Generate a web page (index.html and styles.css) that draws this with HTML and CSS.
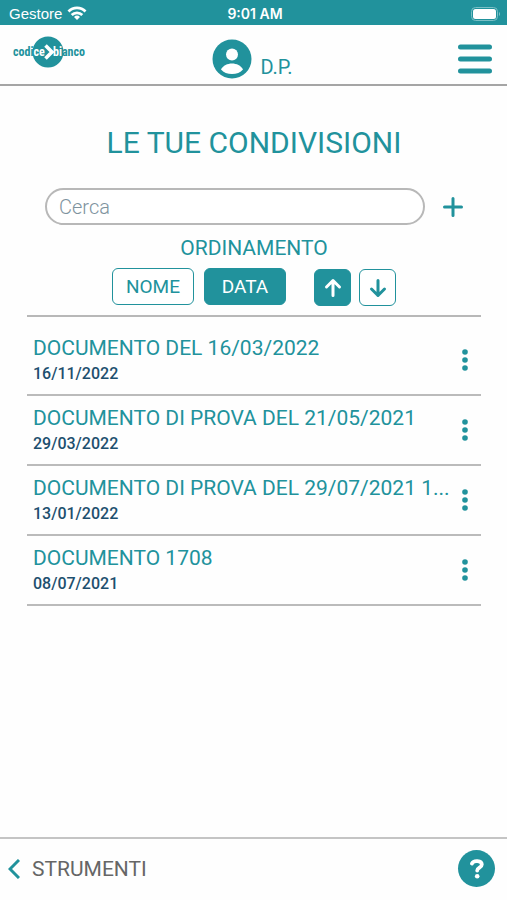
FILE: index.html
```html
<!DOCTYPE html>
<html lang="it">
<head>
    <meta charset="UTF-8">
    <meta name="viewport" content="width=device-width, initial-scale=1.0">
    <title>Le tue condivisioni | Codice Bianco</title>
    <link rel="stylesheet" href="styles.css">
</head>
<body>
    <div class="status-bar">
        <div class="carrier">
            <span>Gestore</span>
            <svg width="20" height="15" viewBox="0 0 20 15" fill="none" stroke="#fff" stroke-width="2.8">
                <path d="M1.5 5.5a12 12 0 0 1 17 0"/>
                <path d="M4.7 9a7.6 7.6 0 0 1 10.6 0"/>
                <path d="M10 14l-3-3a4.3 4.3 0 0 1 6 0z" fill="#fff" stroke="none"/>
            </svg>
        </div>
        <span class="time">9:01 AM</span>
        <div class="battery">
            <svg width="30" height="14" viewBox="0 0 30 14">
                <rect x="0.5" y="0.5" width="26" height="13" rx="4" fill="none" stroke="#7abfc5"/>
                <rect x="2" y="2" width="23" height="10" rx="2.5" fill="#fff"/>
                <path d="M28 5a2.4 2.4 0 0 1 0 4z" fill="#7abfc5"/>
            </svg>
        </div>
    </div>

    <header class="header">
        <a href="#" class="logo" aria-label="codice bianco">
            <svg width="74" height="32" viewBox="0 0 74 32">
                <circle cx="36" cy="16" r="15.5" fill="#21929c"/>
                <text x="1" y="20" fill="#21929c">codi<tspan fill="#fff">ce</tspan></text>
                <path d="M33.500 9.500l6.500 6.500-6.500 6.500" fill="none" stroke="#fff" stroke-width="3.600"/>
                <text x="73" y="20" text-anchor="end" fill="#21929c"><tspan fill="#fff">bi</tspan>anco</text>
            </svg>
        </a>
        <a href="#" class="user">
            <svg width="40" height="40" viewBox="0 0 40 40">
                <circle cx="20" cy="20" r="19.5" fill="#21929c"/>
                <circle cx="20" cy="15.500" r="6" fill="#fff"/>
                <path d="M9 30.500C11 26.500 15.500 24.500 20 24.500s9 2 11 6C28.500 33.500 24.500 35 20 35s-8.500-1.500-11-4.500z" fill="#fff"/>
            </svg>
            <span>D.P.</span>
        </a>
        <button type="button" class="menu-btn" aria-label="Menu">
            <svg width="36" height="32" viewBox="0 0 36 32" stroke="#21929c" stroke-width="5" stroke-linecap="round">
                <path d="M3.500 4h29M3.500 16h29M3.500 28h29"/>
            </svg>
        </button>
    </header>

    <main class="content">
        <h1>LE TUE CONDIVISIONI</h1>

        <div class="search">
            <input type="text" placeholder="Cerca" aria-label="Cerca">
            <button type="button" class="add-btn" aria-label="Aggiungi">
                <svg width="20" height="20" viewBox="0 0 20 20" stroke="#21929c" stroke-width="3" stroke-linecap="round">
                    <path d="M10 1.500v17M1.500 10h17"/>
                </svg>
            </button>
        </div>

        <h2>ORDINAMENTO</h2>
        <div class="sort">
            <button type="button" class="btn">NOME</button>
            <button type="button" class="btn active">DATA</button>
            <button type="button" class="btn arrow first active" aria-label="Crescente">
                <svg width="18" height="20" viewBox="0 0 18 20">
                    <path d="M9 17.500V2.500M2.500 9L9 2.500 15.500 9"/>
                </svg>
            </button>
            <button type="button" class="btn arrow" aria-label="Decrescente">
                <svg width="18" height="20" viewBox="0 0 18 20">
                    <path d="M9 2.500v15M2.500 11L9 17.500l6.500-6.500"/>
                </svg>
            </button>
        </div>

        <ul class="documents">
            <li>
                <div class="info">
                    <a href="#">DOCUMENTO DEL 16/03/2022</a>
                    <span class="date">16/11/2022</span>
                </div>
                <button type="button" class="more" aria-label="Opzioni">
                    <svg width="8" height="22" viewBox="0 0 8 22"><circle cx="4" cy="3" r="2.800"/><circle cx="4" cy="11" r="2.800"/><circle cx="4" cy="19" r="2.800"/></svg>
                </button>
            </li>
            <li>
                <div class="info">
                    <a href="#">DOCUMENTO DI PROVA DEL 21/05/2021</a>
                    <span class="date">29/03/2022</span>
                </div>
                <button type="button" class="more" aria-label="Opzioni">
                    <svg width="8" height="22" viewBox="0 0 8 22"><circle cx="4" cy="3" r="2.800"/><circle cx="4" cy="11" r="2.800"/><circle cx="4" cy="19" r="2.800"/></svg>
                </button>
            </li>
            <li>
                <div class="info">
                    <a href="#">DOCUMENTO DI PROVA DEL 29/07/2021 1...</a>
                    <span class="date">13/01/2022</span>
                </div>
                <button type="button" class="more" aria-label="Opzioni">
                    <svg width="8" height="22" viewBox="0 0 8 22"><circle cx="4" cy="3" r="2.800"/><circle cx="4" cy="11" r="2.800"/><circle cx="4" cy="19" r="2.800"/></svg>
                </button>
            </li>
            <li>
                <div class="info">
                    <a href="#">DOCUMENTO 1708</a>
                    <span class="date">08/07/2021</span>
                </div>
                <button type="button" class="more" aria-label="Opzioni">
                    <svg width="8" height="22" viewBox="0 0 8 22"><circle cx="4" cy="3" r="2.800"/><circle cx="4" cy="11" r="2.800"/><circle cx="4" cy="19" r="2.800"/></svg>
                </button>
            </li>
        </ul>
    </main>

    <footer class="footer">
        <a href="#" class="back">
            <svg width="12" height="20" viewBox="0 0 12 20" fill="none" stroke="#21929c" stroke-width="3">
                <path d="M11 1L2 10l9 9"/>
            </svg>
            <span>STRUMENTI</span>
        </a>
        <button type="button" class="help" aria-label="Aiuto">
            <svg width="16" height="20" viewBox="0 0 16 20">
                <path d="M3 4.500C4.500 1 12.800 1.200 12.800 5.500c0 3.300-4.600 3-4.600 6" fill="none" stroke="#fff" stroke-width="3.800" stroke-linecap="round"/>
                <circle cx="8.200" cy="17.300" r="2.300" fill="#fff"/>
            </svg>
        </button>
    </footer>
</body>
</html>
```
FILE: styles.css
```css
* {
    box-sizing: border-box;
}

body {
    font-family: Roboto, "Liberation Sans", sans-serif;
    background-color: #fefefe;
    color: #21929c;
    display: flex;
    flex-direction: column;
    min-height: 100vh;
    margin: 0;
}

a {
    color: inherit;
    text-decoration: none;
}

button {
    font-family: inherit;
    background: none;
    border: none;
    padding: 0;
    cursor: pointer;
}

svg {
    display: block;
}

.status-bar {
    display: grid;
    grid-template-columns: 1fr auto 1fr;
    align-items: center;
    height: 25px;
    padding: 2px 6px 0 9px;
    background-color: #21929c;
    color: white;
    font-family: "Liberation Sans", Arial, sans-serif;
    font-size: 15px;
}

.carrier {
    display: flex;
    align-items: center;
    gap: 5px;
}

.time {
    font-family: Inter, sans-serif;
    font-size: 14px;
    font-weight: 600;
}

.battery {
    justify-self: end;
}

.header {
    display: grid;
    grid-template-columns: 1fr auto 1fr;
    align-items: center;
    height: 61px;
    padding: 0 14px 0 12px;
    border-bottom: 2px solid #a5a5a5;
}

.logo {
    margin-bottom: 6px;
}

.logo text {
    font-family: "Liberation Sans Narrow", "Roboto Condensed", Roboto, sans-serif;
    font-size: 12px;
    font-weight: bold;
}

.user {
    display: flex;
    align-items: flex-end;
    gap: 8px;
    margin-top: 8px;
    font-size: 20px;
    line-height: 24px;
}

.menu-btn {
    justify-self: end;
    margin-top: 8px;
}

.content {
    flex: 1;
    padding: 37px 26px 0 27px;
}

h1 {
    margin: 0;
    font-size: 30px;
    line-height: 40px;
    font-weight: normal;
    text-align: center;
}

.search {
    display: flex;
    align-items: center;
    gap: 18px;
    margin-top: 25px;
    padding: 0 18px;
}

.search input {
    flex: 1;
    min-width: 0;
    height: 37px;
    padding: 0 12px;
    border: 2px solid #b8b8b8;
    border-radius: 19px;
    background: white;
    color: #21929c;
    font-family: inherit;
    font-size: 20px;
    font-weight: 300;
}

.search input::placeholder {
    color: #7e939e;
    opacity: 1;
}

h2 {
    margin: 10px 0 0;
    font-size: 21px;
    line-height: 26px;
    font-weight: normal;
    text-align: center;
}

.sort {
    display: flex;
    align-items: center;
    justify-content: center;
    gap: 8px;
    margin-top: 6px;
}

.btn {
    width: 82px;
    height: 37px;
    margin-right: 2px;
    border: 1px solid #21929c;
    border-radius: 6px;
    background: white;
    color: #21929c;
    font-size: 19px;
}

.btn.active {
    background-color: #21929c;
    color: white;
}

.btn.arrow {
    display: flex;
    align-items: center;
    justify-content: center;
    width: 37px;
    margin: 2px 0 0;
}

.btn.first {
    margin-left: 18px;
}

.btn.arrow svg {
    fill: none;
    stroke: currentColor;
    stroke-width: 3;
    stroke-linecap: round;
    stroke-linejoin: round;
}

.documents {
    list-style: none;
    margin: 9px 0 0;
    padding: 9px 0 0;
    border-top: 2px solid #b8b8b8;
}

.documents li {
    display: flex;
    align-items: center;
    justify-content: space-between;
    height: 70px;
    padding: 0 12px 0 6px;
    border-bottom: 2px solid #bbb;
}

.info {
    min-width: 0;
}

.info a {
    display: block;
    overflow: hidden;
    white-space: nowrap;
    text-overflow: ellipsis;
    font-size: 21px;
    line-height: 28px;
}

.date {
    display: block;
    color: #1d4f6e;
    font-size: 16px;
    font-weight: 500;
    line-height: 24px;
}

.more svg {
    fill: #21929c;
}

.footer {
    display: flex;
    align-items: center;
    justify-content: space-between;
    height: 63px;
    padding: 0 12px 2px 8px;
    border-top: 2px solid #c4c4c4;
}

.back {
    display: flex;
    align-items: center;
    gap: 12px;
    color: #666;
    font-size: 21px;
}

.help {
    display: flex;
    align-items: center;
    justify-content: center;
    width: 37px;
    height: 37px;
    border-radius: 50%;
    background-color: #21929c;
}
```
